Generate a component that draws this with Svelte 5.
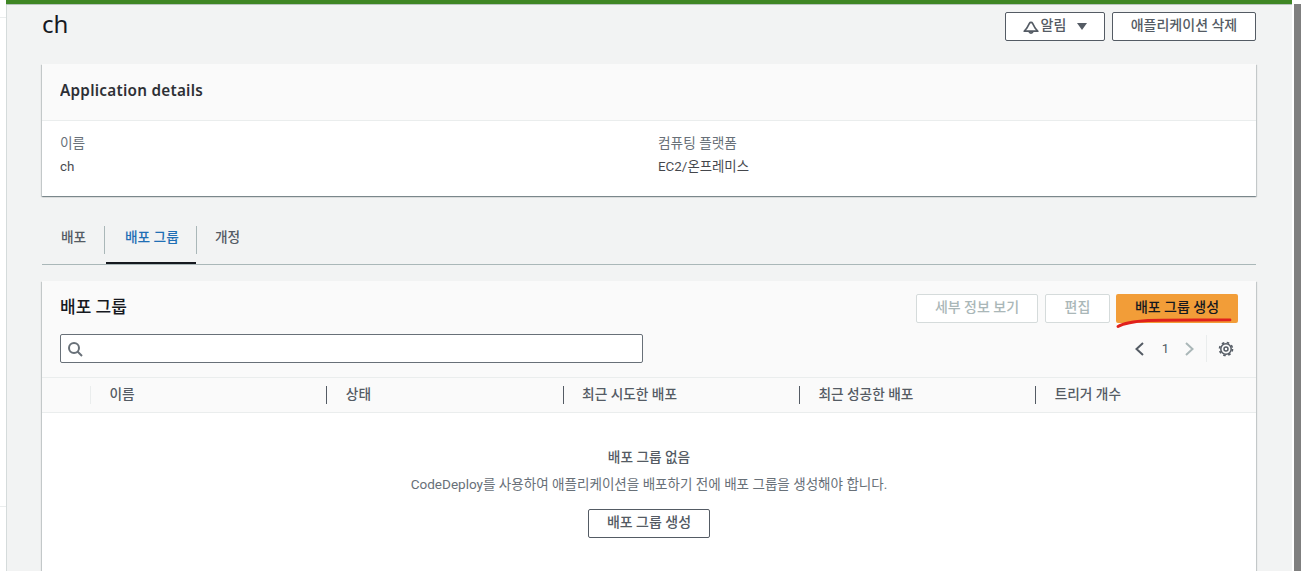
<script>
	const columns = ['이름', '상태', '최근 시도한 배포', '최근 성공한 배포', '트리거 개수']
	const tabs = ['배포', '배포 그룹', '개정']
	let activeTab = 1
</script>

<div class="page">
	<div class="rail">
		<span class="rail-line top"></span>
		<span class="rail-line bottom"></span>
	</div>

	<main class="main">
		<div class="green-bar"></div>
		<div class="content">
			<header class="head">
				<h1>ch</h1>
				<div class="head-actions">
					<button class="btn notify">
						<svg width="16" height="16" viewBox="0 0 16 16" fill="none" stroke="#545b64" stroke-width="1.7">
							<path d="M1.2 12.200h13.600L12.300 9.300 9.600 4.400C8.900 3.100 7.100 3.100 6.400 4.400L3.700 9.300z" stroke-linejoin="round" />
							<path d="M6 12.600a2.100 2.100 0 0 0 4 0" />
						</svg>
						<span>알림</span>
						<i class="caret"></i>
					</button>
					<button class="btn delete">애플리케이션 삭제</button>
				</div>
			</header>

			<section class="card details">
				<div class="card-head"><h2>Application details</h2></div>
				<div class="details-body">
					<div>
						<div class="label">이름</div>
						<div class="value">ch</div>
					</div>
					<div>
						<div class="label">컴퓨팅 플랫폼</div>
						<div class="value">EC2/온프레미스</div>
					</div>
				</div>
			</section>

			<nav class="tabs">
				{#each tabs as tab, i}
					<div class="tab" class:active={i === activeTab} class:first={i === 0}>
						<span>{tab}</span>
					</div>
				{/each}
			</nav>

			<section class="card groups">
				<div class="groups-head">
					<div class="groups-top">
						<h3>배포 그룹</h3>
						<div class="group-actions">
							<button class="btn disabled view">세부 정보 보기</button>
							<button class="btn disabled edit">편집</button>
							<div class="primary-wrap">
								<button class="btn primary">배포 그룹 생성</button>
								<svg class="scribble" width="116" height="12" viewBox="0 0 116 12" fill="none">
									<path d="M2 10.500C8 7 16 5.500 32 4.500c26-.8 52-.3 82-.6" stroke="#e0201c" stroke-width="2.800" stroke-linecap="round" />
								</svg>
							</div>
						</div>
					</div>
					<div class="groups-tools">
						<div class="search">
							<svg width="16" height="16" viewBox="0 0 16 16" fill="none" stroke="#687078" stroke-width="2">
								<circle cx="7" cy="7" r="5" />
								<path d="M10.500 10.500l4.500 4.500" />
							</svg>
						</div>
						<div class="pager">
							<svg width="16" height="16" viewBox="0 0 16 16" fill="none" stroke="#545b64" stroke-width="2">
								<path d="M11 2L4.500 8l6.500 6" />
							</svg>
							<span class="page-num">1</span>
							<svg width="16" height="16" viewBox="0 0 16 16" fill="none" stroke="#aab7b8" stroke-width="2">
								<path d="M5 2l6.500 6L5 14" />
							</svg>
							<span class="pager-sep"></span>
							<svg class="gear" width="16" height="16" viewBox="0 0 16 16" fill="none" stroke="#545b64">
								<circle cx="8" cy="8" r="2" stroke-width="1.500" />
								<circle cx="8" cy="8" r="5.200" stroke-width="1.500" />
								<circle cx="8" cy="8" r="6.500" stroke-width="1.600" stroke-dasharray="2.550 2.555" />
							</svg>
						</div>
					</div>
				</div>

				<div class="table-head">
					<div class="select-cell"></div>
					{#each columns as col}
						<div class="col"><span>{col}</span></div>
					{/each}
				</div>

				<div class="empty">
					<strong>배포 그룹 없음</strong>
					<p>CodeDeploy를 사용하여 애플리케이션을 배포하기 전에 배포 그룹을 생성해야 합니다.</p>
					<button class="btn create">배포 그룹 생성</button>
				</div>
			</section>
		</div>
	</main>

	<div class="scrollbar"></div>
</div>

<style>
:global(body) {
	margin: 0;
	background: #fff;
	overflow: hidden;
}

.page {
	display: flex;
	height: 571px;
	overflow: hidden;
	font-family: Roboto, "Noto Sans CJK KR", sans-serif;
	font-size: 13.7px;
	color: #545b64;
}

.rail {
	width: 6px;
	flex: none;
	position: relative;
	background: #fff;
}

.rail-line {
	position: absolute;
	left: 0;
	right: 0;
	height: 1px;
	background: #eaeded;
}

.rail-line.top { top: 17px; }
.rail-line.bottom { top: 506px; }

.main {
	width: 1286px;
	flex: none;
	background: #f2f3f3;
	border-left: 1px solid #d5dbdb;
	box-sizing: border-box;
}

.green-bar {
	height: 4px;
	background: #3f8624;
	border-bottom: 1px solid #b7c4bd;
	box-sizing: content-box;
	margin-left: -1px;
}

.content {
	padding: 0 36px 0 35px;
}

.head {
	display: flex;
	justify-content: space-between;
	height: 59px;
	padding-top: 6px;
	box-sizing: border-box;
}

h1 {
	margin: 0;
	font-family: "Noto Sans", sans-serif;
	font-size: 24px;
	font-weight: 400;
	line-height: 26px;
	color: #16191f;
}

.head-actions {
	display: flex;
	gap: 7px;
	align-items: flex-start;
	margin-top: 1px;
}

.btn {
	font-family: inherit;
	font-size: 14px;
	font-weight: 500;
	line-height: 18px;
	height: 29px;
	padding: 0;
	border: 1px solid #545b64;
	border-radius: 2px;
	background: #fff;
	color: #545b64;
	box-sizing: border-box;
	padding-bottom: 3px;
}

.notify {
	width: 100px;
	display: flex;
	align-items: center;
	justify-content: center;
	gap: 2px;
}

.notify svg { margin-top: 3px; }

.caret {
	width: 0;
	height: 0;
	margin-left: 9px;
	margin-top: 3px;
	border-left: 5px solid transparent;
	border-right: 5px solid transparent;
	border-top: 7px solid #545b64;
}

.delete {
	width: 144px;
}

.card {
	background: #fff;
	box-shadow: 0 1px 1px 0 rgba(0, 28, 36, 0.3), 1px 1px 1px 0 rgba(0, 28, 36, 0.15), -1px 1px 1px 0 rgba(0, 28, 36, 0.15);
}

.details {
	height: 132px;
}

.card-head {
	height: 57px;
	box-sizing: border-box;
	padding: 0 18px 4px;
	background: #fafafa;
	border-bottom: 1px solid #eaeded;
	display: flex;
	align-items: center;
}

h2 {
	margin: 0;
	font-family: "Noto Sans", sans-serif;
	font-size: 15.300px;
	font-weight: 600;
	letter-spacing: 0.25px;
	color: #16191f;
	opacity: 0.9;
}

.details-body {
	display: grid;
	grid-template-columns: 598px 1fr;
	padding: 12px 18px 0;
}

.label {
	line-height: 20px;
	color: #687078;
}

.value {
	margin-top: 4px;
	font-size: 13.400px;
	line-height: 20px;
	color: #16191f;
	opacity: 0.8;
}

.tabs {
	display: flex;
	height: 69px;
	padding-top: 30px;
	box-sizing: border-box;
	border-bottom: 1px solid #aab7b8;
}

.tab {
	position: relative;
	box-sizing: border-box;
	font-weight: 500;
	color: #545b64;
	padding: 0 18px;
	line-height: 22px;
	border-left: 1px solid #aab7b8;
	height: 28px;
}

.tab.first {
	border-left: 0;
	width: 62px;
	padding: 0 0 0 19px;
}

.tab.active {
	width: 92px;
	color: #1f6fb5;
	padding: 0 0 0 20px;
}

.tab.active::after {
	content: "";
	position: absolute;
	left: 1px;
	right: 0;
	top: 36px;
	height: 2px;
	background: #16191f;
}

.tab span { display: block; }

.groups {
	margin-top: 16px;
	height: 310px;
}

.groups-head {
	background: #fafafa;
	padding: 13px 18px 14px;
	height: 96px;
	box-sizing: border-box;
}

.groups-top {
	display: flex;
	justify-content: space-between;
}

h3 {
	margin: 0;
	font-size: 17px;
	font-weight: 500;
	line-height: 26px;
	color: #16191f;
}

.group-actions {
	display: flex;
	gap: 7px;
}

.disabled {
	border-color: #d5dbdb;
	color: #aab7b8;
}

.view { width: 122px; }
.edit { width: 65px; margin-right: -1px; }

.primary-wrap {
	position: relative;
}

.primary {
	width: 122px;
	border: 0;
	background: #f29d38;
	color: #16191f;
}

.scribble {
	position: absolute;
	left: 0;
	top: 22px;
}

.groups-tools {
	display: flex;
	justify-content: space-between;
	margin-top: 11px;
}

.search {
	width: 583px;
	height: 29px;
	box-sizing: border-box;
	background: #fff;
	border: 1px solid #687078;
	border-radius: 2px;
	display: flex;
	align-items: center;
	padding-left: 6px;
}

.pager {
	display: flex;
	align-items: center;
	height: 29px;
	margin-right: 4px;
}

.page-num {
	margin: -1px 12px 0 14px;
	font-size: 13px;
	color: #545b64;
}

.pager-sep {
	width: 1px;
	height: 27px;
	background: #eaeded;
	margin: 0 11px 0 9px;
}

.table-head {
	display: grid;
	grid-template-columns: 48px repeat(4, 236.300px) 1fr;
	height: 36px;
	background: #fafafa;
	border-top: 1px solid #eaeded;
	border-bottom: 1px solid #eaeded;
	box-sizing: border-box;
	align-items: center;
	font-weight: 500;
}

.col {
	border-left: 1px solid #545b64;
	padding-left: 18.500px;
	height: 18px;
	line-height: 17px;
	white-space: nowrap;
}

.col:nth-child(2) {
	border-left-color: #eaeded;
}

.empty {
	display: flex;
	flex-direction: column;
	align-items: center;
	padding-top: 33px;
}

.empty strong {
	font-weight: 500;
	line-height: 22px;
}

.empty p {
	margin: 5px 0 0;
	font-size: 13.550px;
	line-height: 22px;
	color: #687078;
}

.create {
	margin-top: 14px;
	width: 122px;
}

.scrollbar {
	width: 7px;
	margin: 4px 0 0 2px;
	background: #7f7f7f;
	flex: none;
}
</style>
